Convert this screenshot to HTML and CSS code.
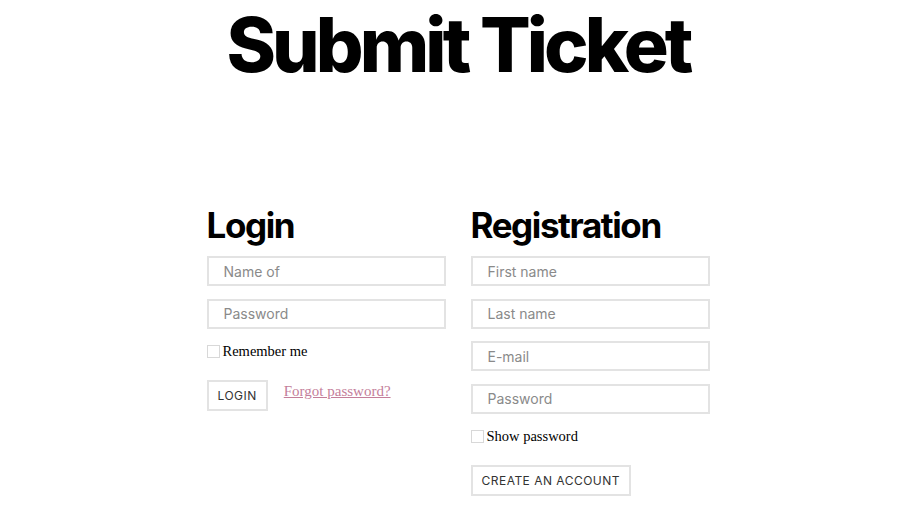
FILE: index.html
```html
<!DOCTYPE html>
<html lang="en">
<head>
<meta charset="utf-8">
<title>Submit Ticket</title>
<link rel="stylesheet" href="styles.css">
</head>
<body>
<h1 class="title">Submit Ticket</h1>
<main class="forms">
  <section class="col">
    <h2 class="heading">Login</h2>
    <div class="fields">
      <input class="field" type="text" placeholder="Name of">
      <input class="field" type="password" placeholder="Password">
    </div>
    <label class="check"><span class="box"></span>Remember me</label>
    <div class="actions">
      <button class="btn">LOGIN</button>
      <a class="link" href="#">Forgot password?</a>
    </div>
  </section>
  <section class="col">
    <h2 class="heading">Registration</h2>
    <div class="fields">
      <input class="field" type="text" placeholder="First name">
      <input class="field" type="text" placeholder="Last name">
      <input class="field" type="text" placeholder="E-mail">
      <input class="field" type="password" placeholder="Password">
    </div>
    <label class="check"><span class="box"></span>Show password</label>
    <div class="actions">
      <button class="btn">CREATE AN ACCOUNT</button>
    </div>
  </section>
</main>
</body>
</html>
```
FILE: styles.css
```css
* { box-sizing: border-box; }
html, body { margin: 0; padding: 0; background: #fff; }
body { font-family: Inter, "Noto Sans", sans-serif; color: #000; padding-left: 16px; }

.title {
  margin: 0;
  text-align: center;
  font-size: 75px;
  line-height: 90px;
  font-weight: 800;
  letter-spacing: -0.052em;
}

.forms {
  display: flex;
  justify-content: center;
  gap: 25px;
  margin-top: 113px;
}

.col { width: 239px; display: flex; flex-direction: column; align-items: flex-start; }

.heading {
  margin: 0 0 9px;
  font-size: 35px;
  line-height: 44px;
  font-weight: 700;
  letter-spacing: -0.04em;
}

.fields { display: flex; flex-direction: column; gap: 12.5px; width: 100%; }

.field {
  width: 100%;
  height: 30px;
  border: 2px solid #e3e3e3;
  padding: 0 15px;
  font-family: Inter, sans-serif;
  font-size: 14px;
  color: #333;
  outline: none;
  background: #fff;
}
.field::placeholder { color: #8a8a8a; }

.check {
  display: flex;
  align-items: center;
  gap: 3px;
  margin-top: 16px;
  font-family: "Liberation Serif", serif;
  font-size: 14.5px;
  color: #000;
  height: 14px;
}
.box {
  width: 13px;
  height: 13px;
  border: 1px solid #d8d8d8;
  display: inline-block;
}

.actions {
  display: flex;
  align-items: flex-start;
  gap: 16px;
  margin-top: 21px;
}

.btn {
  height: 31px;
  padding: 0 9px;
  border: 2px solid #e3e3e3;
  background: #fff;
  font-family: Inter, sans-serif;
  font-size: 12px;
  letter-spacing: 0.04em;
  color: #333;
}

.link {
  font-family: "Liberation Serif", serif;
  font-size: 15px;
  color: #c47e9a;
  text-decoration: underline;
  margin-top: 3px;
}
```
